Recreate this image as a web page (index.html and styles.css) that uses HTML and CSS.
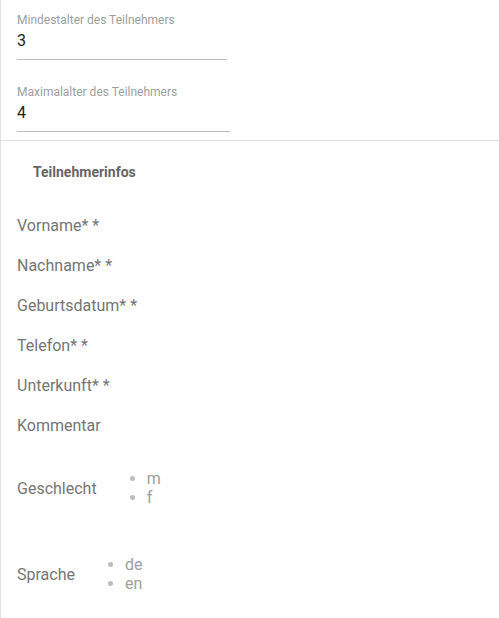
FILE: index.html
```html
<!DOCTYPE html>
<html lang="de">
<head>
    <meta charset="UTF-8">
    <meta name="viewport" content="width=device-width, initial-scale=1.0">
    <title>Teilnehmer</title>
    <link rel="stylesheet" href="styles.css">
</head>
<body>
    <div class="panel">
        <div class="age-section">
            <div class="field">
                <label class="field-label">Mindestalter des Teilnehmers</label>
                <div class="field-input field-input-min">3</div>
            </div>
            <div class="field">
                <label class="field-label">Maximalalter des Teilnehmers</label>
                <div class="field-input field-input-max">4</div>
            </div>
        </div>

        <div class="info-section">
            <h3 class="section-title">Teilnehmerinfos</h3>
            <div class="info-row">Vorname* *</div>
            <div class="info-row">Nachname* *</div>
            <div class="info-row">Geburtsdatum* *</div>
            <div class="info-row">Telefon* *</div>
            <div class="info-row">Unterkunft* *</div>
            <div class="info-row">Kommentar</div>

            <div class="choice-row choice-row-first">
                <span class="choice-label">Geschlecht</span>
                <ul class="choice-list">
                    <li>m</li>
                    <li>f</li>
                </ul>
            </div>
            <div class="choice-row">
                <span class="choice-label">Sprache</span>
                <ul class="choice-list">
                    <li>de</li>
                    <li>en</li>
                </ul>
            </div>
        </div>
    </div>
</body>
</html>
```

FILE: styles.css
```css
* {
    margin: 0;
    padding: 0;
    box-sizing: border-box;
    font-family: Roboto, 'Noto Sans', sans-serif;
}

body {
    background: #fff;
    height: 618px;
    overflow: hidden;
}

.panel {
    border-left: 1px solid #e0e0e0;
    min-height: 618px;
}

.age-section {
    padding: 0 0 8px 16px;
}

.field {
    padding-top: 13px;
    margin-bottom: 12px;
}

.field:last-child {
    margin-bottom: 0;
}

.field-label {
    display: block;
    font-size: 12px;
    line-height: 14px;
    color: #9e9e9e;
}

.field-input {
    font-size: 16px;
    line-height: 19px;
    color: #212121;
    padding: 4px 0 9px;
    border-bottom: 1px solid #bdbdbd;
}

.field-input-min {
    width: 210px;
}

.field-input-max {
    width: 213px;
}

.info-section {
    border-top: 1px solid #e0e0e0;
    padding: 0 0 0 16px;
}

.section-title {
    font-size: 14px;
    font-weight: bold;
    line-height: 16px;
    color: #666;
    padding: 23px 0 0 16px;
    margin-bottom: 26px;
}

.info-row {
    font-size: 16px;
    line-height: 40px;
    height: 40px;
    color: #757575;
}

.choice-row {
    display: flex;
    align-items: center;
    padding: 8px 0;
}

.choice-row-first {
    padding-top: 7px;
}

.choice-label {
    font-size: 16px;
    line-height: 19px;
    color: #757575;
    margin-right: 10px;
}

.choice-list {
    margin: 16px 0;
    padding-left: 40px;
    font-size: 16px;
    line-height: 19px;
    color: #9e9e9e;
}

.choice-list li::marker {
    color: #bdbdbd;
}
```
